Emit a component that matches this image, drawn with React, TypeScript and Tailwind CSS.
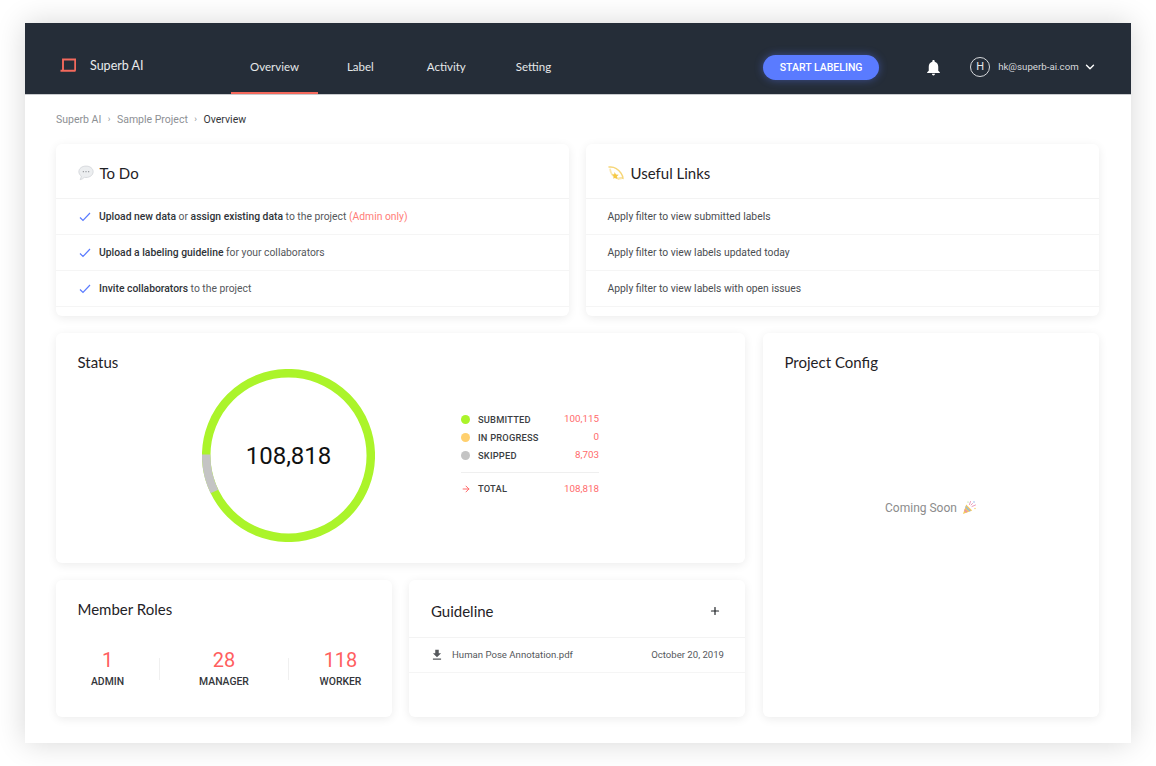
import React from 'react';
import { ChevronDown, Plus, ArrowRight } from 'lucide-react';
import { MdFileDownload, MdNotifications } from 'react-icons/md';

const tabs = [
  { name: 'Overview', gap: '' },
  { name: 'Label', gap: 'ml-[10px]' },
  { name: 'Activity', gap: 'ml-[15px]' },
  { name: 'Setting', gap: 'ml-[12px]' },
];

const todos = [
  <><b className="font-medium text-[#2f3338]">Upload new data</b> or <b className="font-medium text-[#2f3338]">assign existing data</b> to the project <span className="text-[#ff7d78]">(Admin only)</span></>,
  <><b className="font-medium text-[#2f3338]">Upload a labeling guideline</b> for your collaborators</>,
  <><b className="font-medium text-[#2f3338]">Invite collaborators</b> to the project</>,
];

const links = [
  'Apply filter to view submitted labels',
  'Apply filter to view labels updated today',
  'Apply filter to view labels with open issues',
];

const legend = [
  { label: 'SUBMITTED', value: '100,115', dot: 'bg-[#abf42a]' },
  { label: 'IN PROGRESS', value: '0', dot: 'bg-[#ffd06e]' },
  { label: 'SKIPPED', value: '8,703', dot: 'bg-[#c4c4c4]' },
];

const roles = [
  { count: '1', name: 'ADMIN', width: 'w-[103px]' },
  { count: '28', name: 'MANAGER', width: 'w-[128px]' },
  { count: '118', name: 'WORKER', width: 'w-[103px]' },
];

const card = 'bg-white rounded-[6px] shadow-[0_2px_10px_rgba(0,0,0,0.08)]';
const heading = "font-['Lato',sans-serif] text-[15px] text-[#1f2226]";

const BlueCheck = () => (
  <svg className="shrink-0" width="12" height="10" viewBox="0 0 12 10" fill="none">
    <path d="M1 5.500L4 8.500L11 1" stroke="#5a7bff" strokeWidth="1.200" />
  </svg>
);

const BubbleEmoji = () => (
  <svg width="16" height="16" viewBox="0 0 15 15">
    <path d="M7.5 1C3.6 1 .8 3.3.8 6.3c0 1.7.9 3.1 2.3 4.1-.1 1.1-.6 2.3-1.1 3.4 1.500-.3 3-1.200 3.900-2.200.5.100 1 .1 1.600.1 3.900 0 6.700-2.400 6.700-5.400S11.400 1 7.500 1z" fill="#eceef0" stroke="#cfd2d6" strokeWidth="0.7" />
    <circle cx="5" cy="6.300" r="0.600" fill="#8b8f94" />
    <circle cx="7.500" cy="6.300" r="0.600" fill="#8b8f94" />
    <circle cx="10" cy="6.300" r="0.600" fill="#8b8f94" />
  </svg>
);

const DizzyEmoji = () => (
  <svg width="16" height="15" viewBox="0 0 16 15" fill="none">
    <path d="M1 1c4.500-.6 9 1.800 12 6.200 1 1.500 1.900 3.500 1.900 5-1.600-.5-3.100-.2-4.700.7" stroke="#f6d678" strokeWidth="1.500" strokeLinecap="round" />
    <path d="M2.200 3.500c.3 3.200 2.800 6.800 6.200 8.300 1.600.7 3.200.8 5 .6" stroke="#fae7ae" strokeWidth="1.800" strokeLinecap="round" />
    <path d="M6.500 6l1.500 2.400 2.700.3-1.800 1.900.5 2.500-2.500-1.200-1.700.9.500-2.600-1.700-1.700 2.300-.3z" fill="#f6c945" />
  </svg>
);

const PartyEmoji = () => (
  <svg width="15" height="15" viewBox="0 0 15 15">
    <path d="M1 14l3.200-9.500 6 6z" fill="#f5c95c" />
    <path d="M2.800 9l3 3-1.600.600-2-2z" fill="#e88fb0" />
    <path d="M3.800 6l5 5-1.300.5L3.300 7.300z" fill="#8fb7e8" />
    <path d="M7.500 4.500l1-3M10 6.500l3.500-1.500M9 5l1.500-1.500" stroke="#e88fb0" strokeWidth="0.900" strokeLinecap="round" />
    <circle cx="12" cy="2" r="0.800" fill="#8fb7e8" />
    <circle cx="13" cy="8.500" r="0.700" fill="#f5c95c" />
    <circle cx="6" cy="2" r="0.600" fill="#9bd77a" />
  </svg>
);

const Donut = () => (
  <div className="grid w-[173px] h-[173px] shrink-0">
    <svg className="col-start-1 row-start-1" width="173" height="173" viewBox="0 0 173 173" fill="none">
      <circle cx="86.500" cy="86.500" r="82.300" stroke="#abf42a" strokeWidth="8.500" />
      <path d="M4.200 85.500A82.300 82.300 0 0 0 12.400 122.500" stroke="#c4c4c4" strokeWidth="8.500" />
    </svg>
    <div className="col-start-1 row-start-1 flex items-center justify-center font-['Roboto',sans-serif] text-[24px] text-[#111]">
      108,818
    </div>
  </div>
);

export default function App() {
  return (
    <div className="w-[1156px] h-[766px] bg-white pt-[23px] px-[25px] overflow-hidden font-['Roboto',sans-serif]">
      <div className="w-[1106px] h-[720px] bg-white shadow-[0_0_28px_rgba(0,0,0,0.16)]">
        <header className="h-[72px] bg-[#252d38] border-b border-[#c9cbce] pt-[17px] pl-[35px] flex items-center text-white">
          <svg className="mb-[5px]" width="16" height="14" viewBox="0 0 16 14" fill="none">
            <path d="M.5 12.700h15M3 12.500V1.500h12.200v11.200" stroke="#f4695c" strokeWidth="1.900" />
          </svg>
          <span className="ml-[14px] mb-[2px] text-[12.500px] font-['Lato',sans-serif] text-[#e9ebed] w-[141px]">Superb AI</span>
          <nav className="flex self-stretch">
            {tabs.map((tab, i) => (
              <div
                key={tab.name}
                className={`${tab.gap} px-[19px] pt-[2px] flex items-center justify-center font-['Lato',sans-serif] text-[11.500px] text-[#e6e8ea] border-b-2 ${i === 0 ? 'border-[#f4695c]' : 'border-transparent'}`}
              >
                {tab.name}
              </div>
            ))}
          </nav>
          <button className="ml-[193px] w-[116px] h-[25px] rounded-full bg-[#5a7bff] text-[10.500px] font-medium pt-[1px] shadow-[0_0_8px_rgba(90,123,255,0.45)]">
            START LABELING
          </button>
          <MdNotifications className="ml-[45px] text-white" size={19} />
          <div className="ml-[27px] w-[20px] h-[20px] rounded-full border border-[#d7d9dc] flex items-center justify-center text-[11px] text-[#e6e8ea]">H</div>
          <span className="ml-[8px] text-[9.700px] text-[#d7d9dc]">hk@superb-ai.com</span>
          <ChevronDown className="ml-[4px] text-white" size={14} strokeWidth={2.400} />
        </header>

        <main className="px-[31px]">
          <div className="h-[49px] flex items-center gap-[6.500px] text-[10.500px] text-[#8d9094]">
            <span>Superb AI</span>
            <span className="text-[9px]">›</span>
            <span>Sample Project</span>
            <span className="text-[9px]">›</span>
            <span className="text-[#33363a]">Overview</span>
          </div>

          <div className="grid grid-cols-[513px_513px] gap-[17px]">
            <section className={`${card} h-[172px]`}>
              <div className="h-[55px] pt-[4px] pl-[21.500px] pr-[22px] flex items-center gap-[6px] border-b border-[#f3f3f3]">
                <BubbleEmoji />
                <h2 className={heading}>To Do</h2>
              </div>
              {todos.map((todo, i) => (
                <div key={i} className="h-[36px] pl-[22.500px] pr-[22px] flex items-center gap-[8.500px] border-b border-[#f5f5f5] text-[10.350px] text-[#55585c]">
                  <BlueCheck />
                  <span>{todo}</span>
                </div>
              ))}
            </section>

            <section className={`${card} h-[172px]`}>
              <div className="h-[55px] pt-[4px] pl-[21.500px] pr-[22px] flex items-center gap-[7px] border-b border-[#f3f3f3]">
                <DizzyEmoji />
                <h2 className={heading}>Useful Links</h2>
              </div>
              {links.map((link) => (
                <div key={link} className="h-[36px] px-[21.500px] flex items-center border-b border-[#f5f5f5] text-[10.350px] text-[#4a4d51]">
                  {link}
                </div>
              ))}
            </section>
          </div>

          <div className="mt-[17px] grid grid-cols-[689px_336px] gap-x-[18px]">
            <div className="flex flex-col gap-[17px]">
              <section className={`${card} h-[230px] pl-[21.500px] flex items-start`}>
                <h2 className={`${heading} w-[124.500px] pt-[18px]`}>Status</h2>
                <div className="mt-[36px]">
                  <Donut />
                </div>
                <div className="ml-[86px] mt-[78px] w-[138px] text-[9.300px] font-medium">
                  {legend.map((row) => (
                    <div key={row.label} className="h-[18px] pb-[1px] flex items-center">
                      <span className={`w-[9px] h-[9px] rounded-full ${row.dot}`} />
                      <span className="ml-[8px] text-[#3b3e42] tracking-[0.2px]">{row.label}</span>
                      <span className="ml-auto font-normal text-[#ff6b6b] text-[9.800px]">{row.value}</span>
                    </div>
                  ))}
                  <div className="mt-[7px] pt-[7px] border-t border-[#efefef] h-[26px] flex items-center">
                    <ArrowRight className="text-[#ff6b6b]" size={10} strokeWidth={2.400} />
                    <span className="ml-[7px] text-[#3b3e42] tracking-[0.2px]">TOTAL</span>
                    <span className="ml-auto font-normal text-[#ff6b6b] text-[9.800px]">108,818</span>
                  </div>
                </div>
              </section>

              <div className="grid grid-cols-[336px_336px] gap-x-[17px]">
                <section className={`${card} h-[137px]`}>
                  <h2 className={`${heading} pl-[21.500px] pt-[18px]`}>Member Roles</h2>
                  <div className="mt-[28px] flex items-center">
                    {roles.map((role, i) => (
                      <React.Fragment key={role.name}>
                        {i > 0 && <div className="w-px h-[22px] bg-[#f0f0f0]" />}
                        <div className={`${role.width} flex flex-col items-center`}>
                          <span className="text-[20px] leading-[22px] text-[#ff5f5f]">{role.count}</span>
                          <span className="mt-[3px] text-[10.400px] font-medium text-[#33363a]">{role.name}</span>
                        </div>
                      </React.Fragment>
                    ))}
                  </div>
                </section>

                <section className={`${card} h-[137px]`}>
                  <div className="h-[58px] pt-[5px] pl-[22px] pr-[24px] flex items-center justify-between border-b border-[#f3f3f3]">
                    <h2 className={heading}>Guideline</h2>
                    <Plus className="text-[#1f2226]" size={12} strokeWidth={2.400} />
                  </div>
                  <div className="h-[35px] pl-[21px] pr-[21px] flex items-center border-b border-[#f5f5f5] text-[9.600px] text-[#55585c]">
                    <MdFileDownload className="text-[#55585c]" size={14} />
                    <span className="ml-[8px]">Human Pose Annotation.pdf</span>
                    <span className="ml-auto">October 20, 2019</span>
                  </div>
                </section>
              </div>
            </div>

            <section className={`${card} h-[384px] flex flex-col`}>
              <h2 className={`${heading} pl-[21.500px] pt-[18px]`}>Project Config</h2>
              <div className="mt-[125px] flex items-center justify-center gap-[5px] text-[12px] text-[#8c8c8c]">
                <span>Coming Soon</span>
                <PartyEmoji />
              </div>
            </section>
          </div>
        </main>
      </div>
    </div>
  );
}
